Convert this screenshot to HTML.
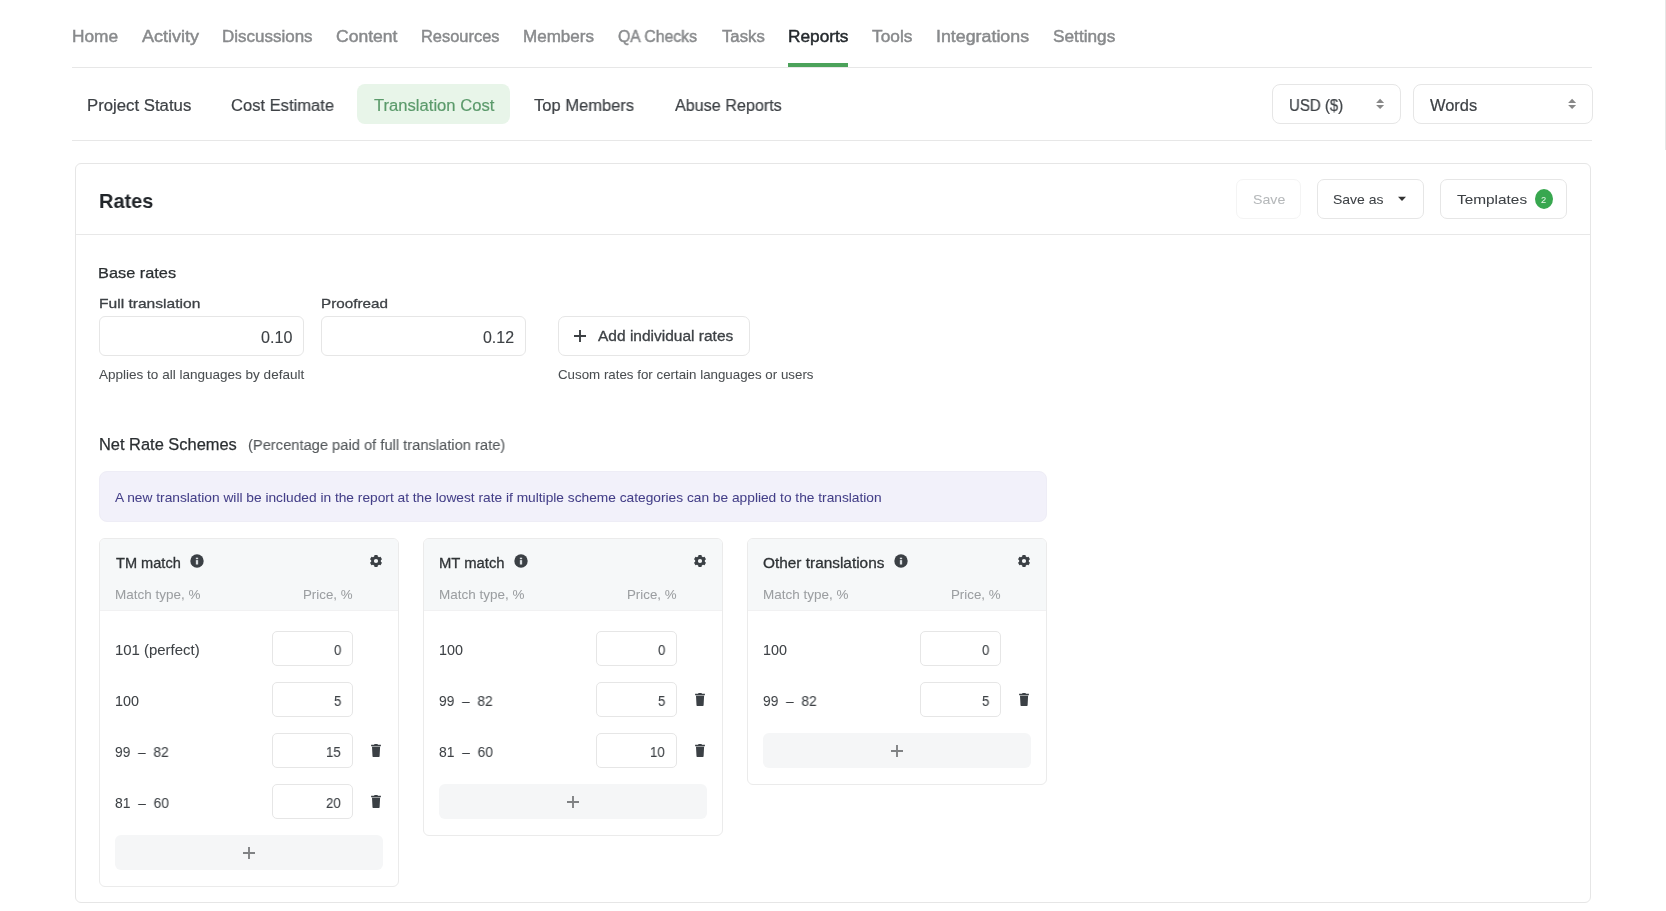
<!DOCTYPE html>
<html><head><meta charset="utf-8"><title>Translation Cost</title>
<style>
html,body{margin:0;padding:0;background:#fff;width:1666px;height:911px;overflow:hidden;position:relative}
.t{position:absolute;font-family:"Liberation Sans",sans-serif;white-space:nowrap;line-height:normal;transform-origin:0 0;will-change:transform}
.r{position:absolute;box-sizing:border-box}
svg.r{display:block}
</style></head><body>
<div class="r" style="left:72px;top:67px;width:1520px;height:1px;background:#e7e7e7"></div>
<div class="r" style="left:788px;top:63px;width:60px;height:4px;background:#4ba25a"></div>
<div class="r" style="left:1665px;top:0px;width:1px;height:150px;background:#e6e6e6"></div>
<div class="r" style="left:357px;top:84px;width:153px;height:40px;background:#e8f5e9;border-radius:8px"></div>
<div class="r" style="left:1272px;top:84px;width:129px;height:40px;border:1px solid #e6e6e6;border-radius:8px;background:#fff"></div>
<div class="r" style="left:1413px;top:84px;width:180px;height:40px;border:1px solid #e6e6e6;border-radius:8px;background:#fff"></div>
<svg class="r" style="left:1376px;top:98px" width="10" height="12" viewBox="0 0 10 12"><path d="M4.1 0.8 L8.1 5 L0.1 5 Z M4.1 11 L8.1 6.9 L0.1 6.9 Z" fill="#888"/></svg>
<svg class="r" style="left:1568px;top:98px" width="10" height="12" viewBox="0 0 10 12"><path d="M4.1 0.8 L8.1 5 L0.1 5 Z M4.1 11 L8.1 6.9 L0.1 6.9 Z" fill="#888"/></svg>
<div class="r" style="left:72px;top:140px;width:1520px;height:1px;background:#e7e7e7"></div>
<div class="r" style="left:75px;top:163px;width:1516px;height:740px;border:1px solid #e6e6e6;border-radius:6px;background:#fff"></div>
<div class="r" style="left:76px;top:234px;width:1514px;height:1px;background:#e8e8e8"></div>
<div class="r" style="left:1236px;top:179px;width:65px;height:40px;border:1px solid #f4f4f4;border-radius:7px"></div>
<div class="r" style="left:1317px;top:179px;width:107px;height:40px;border:1px solid #e6e6e6;border-radius:7px"></div>
<svg class="r" style="left:1397px;top:196px" width="10" height="6" viewBox="0 0 10 6"><path d="M1 0.8 L9 0.8 L5 5 Z" fill="#333"/></svg>
<div class="r" style="left:1440px;top:179px;width:127px;height:40px;border:1px solid #e6e6e6;border-radius:7px"></div>
<div class="r" style="left:1535px;top:189px;width:18px;height:20px;background:#38a74f;border-radius:50%"></div>
<div class="r" style="left:99px;top:316px;width:205px;height:40px;border:1px solid #e6e6e6;border-radius:6px"></div>
<div class="r" style="left:321px;top:316px;width:205px;height:40px;border:1px solid #e6e6e6;border-radius:6px"></div>
<div class="r" style="left:558px;top:316px;width:192px;height:40px;border:1px solid #e6e6e6;border-radius:7px"></div>
<svg class="r" style="left:574px;top:330px" width="12" height="12" viewBox="0 0 12 12"><path d="M6 0 V12 M0 6 H12" stroke="#3c4043" stroke-width="1.9"/></svg>
<div class="r" style="left:99px;top:471px;width:948px;height:51px;background:#f2f1fa;border:1px solid #eeedf6;border-radius:8px"></div>
<div class="r" style="left:99px;top:538px;width:300px;height:349px;border:1px solid #ebebeb;border-radius:6px;background:#fff"></div>
<div class="r" style="left:100px;top:539px;width:298px;height:72px;background:#f6f8f9;border-bottom:1px solid #f1f1f2;border-radius:5px 5px 0 0"></div>
<svg class="r" style="left:188.8px;top:553px" width="16" height="16" viewBox="0 0 16 16"><circle cx="8" cy="8" r="6.7" fill="#3b4045"/><rect x="6.85" y="7.1" width="2.3" height="4.4" fill="#d9dde0"/><rect x="6.85" y="4.7" width="2.3" height="1.5" fill="#d9dde0"/></svg>
<svg class="r" style="left:368px;top:552.7px" width="16" height="16" viewBox="0 0 16 16"><path fill="#3b4045" fill-rule="evenodd" d="M6.15 3.46 L6.57 1.92 L9.43 1.92 L9.85 3.46 L11.00 4.13 L12.56 3.72 L13.98 6.19 L12.85 7.33 L12.85 8.67 L13.98 9.81 L12.56 12.28 L11.00 11.87 L9.85 12.54 L9.43 14.08 L6.57 14.08 L6.15 12.54 L5.00 11.87 L3.44 12.28 L2.02 9.81 L3.15 8.67 L3.15 7.33 L2.02 6.19 L3.44 3.72 L5.00 4.13 Z M10.10 8.00 A2.1 2.1 0 1 0 5.90 8.00 A2.1 2.1 0 1 0 10.10 8.00 Z"/></svg>
<div class="r" style="left:272px;top:631px;width:81px;height:35px;border:1px solid #e6e6e6;border-radius:5px;background:#fff"></div>
<div class="r" style="left:272px;top:682px;width:81px;height:35px;border:1px solid #e6e6e6;border-radius:5px;background:#fff"></div>
<div class="r" style="left:272px;top:733px;width:81px;height:35px;border:1px solid #e6e6e6;border-radius:5px;background:#fff"></div>
<svg class="r" style="left:370px;top:742.8px" width="12" height="15" viewBox="0 0 12 15"><path fill="#3b4045" d="M4.3 1 H7.7 V2 H4.3 Z M1.1 1.8 H10.9 V3.2 H1.1 Z M2 3.8 H10.1 L9.6 13.3 Q9.55 13.9 9 13.9 H3.1 Q2.55 13.9 2.5 13.3 Z"/></svg>
<div class="r" style="left:272px;top:784px;width:81px;height:35px;border:1px solid #e6e6e6;border-radius:5px;background:#fff"></div>
<svg class="r" style="left:370px;top:793.8px" width="12" height="15" viewBox="0 0 12 15"><path fill="#3b4045" d="M4.3 1 H7.7 V2 H4.3 Z M1.1 1.8 H10.9 V3.2 H1.1 Z M2 3.8 H10.1 L9.6 13.3 Q9.55 13.9 9 13.9 H3.1 Q2.55 13.9 2.5 13.3 Z"/></svg>
<div class="r" style="left:115px;top:835px;width:268px;height:35px;background:#f5f6f7;border-radius:6px"></div>
<svg class="r" style="left:243px;top:847px" width="12" height="12" viewBox="0 0 12 12"><path d="M6 0 V12 M0 6 H12" stroke="#808284" stroke-width="1.9"/></svg>
<div class="r" style="left:423px;top:538px;width:300px;height:298px;border:1px solid #ebebeb;border-radius:6px;background:#fff"></div>
<div class="r" style="left:424px;top:539px;width:298px;height:72px;background:#f6f8f9;border-bottom:1px solid #f1f1f2;border-radius:5px 5px 0 0"></div>
<svg class="r" style="left:512.9px;top:553px" width="16" height="16" viewBox="0 0 16 16"><circle cx="8" cy="8" r="6.7" fill="#3b4045"/><rect x="6.85" y="7.1" width="2.3" height="4.4" fill="#d9dde0"/><rect x="6.85" y="4.7" width="2.3" height="1.5" fill="#d9dde0"/></svg>
<svg class="r" style="left:692px;top:552.7px" width="16" height="16" viewBox="0 0 16 16"><path fill="#3b4045" fill-rule="evenodd" d="M6.15 3.46 L6.57 1.92 L9.43 1.92 L9.85 3.46 L11.00 4.13 L12.56 3.72 L13.98 6.19 L12.85 7.33 L12.85 8.67 L13.98 9.81 L12.56 12.28 L11.00 11.87 L9.85 12.54 L9.43 14.08 L6.57 14.08 L6.15 12.54 L5.00 11.87 L3.44 12.28 L2.02 9.81 L3.15 8.67 L3.15 7.33 L2.02 6.19 L3.44 3.72 L5.00 4.13 Z M10.10 8.00 A2.1 2.1 0 1 0 5.90 8.00 A2.1 2.1 0 1 0 10.10 8.00 Z"/></svg>
<div class="r" style="left:596px;top:631px;width:81px;height:35px;border:1px solid #e6e6e6;border-radius:5px;background:#fff"></div>
<div class="r" style="left:596px;top:682px;width:81px;height:35px;border:1px solid #e6e6e6;border-radius:5px;background:#fff"></div>
<svg class="r" style="left:694px;top:691.8px" width="12" height="15" viewBox="0 0 12 15"><path fill="#3b4045" d="M4.3 1 H7.7 V2 H4.3 Z M1.1 1.8 H10.9 V3.2 H1.1 Z M2 3.8 H10.1 L9.6 13.3 Q9.55 13.9 9 13.9 H3.1 Q2.55 13.9 2.5 13.3 Z"/></svg>
<div class="r" style="left:596px;top:733px;width:81px;height:35px;border:1px solid #e6e6e6;border-radius:5px;background:#fff"></div>
<svg class="r" style="left:694px;top:742.8px" width="12" height="15" viewBox="0 0 12 15"><path fill="#3b4045" d="M4.3 1 H7.7 V2 H4.3 Z M1.1 1.8 H10.9 V3.2 H1.1 Z M2 3.8 H10.1 L9.6 13.3 Q9.55 13.9 9 13.9 H3.1 Q2.55 13.9 2.5 13.3 Z"/></svg>
<div class="r" style="left:439px;top:784px;width:268px;height:35px;background:#f5f6f7;border-radius:6px"></div>
<svg class="r" style="left:567px;top:796px" width="12" height="12" viewBox="0 0 12 12"><path d="M6 0 V12 M0 6 H12" stroke="#808284" stroke-width="1.9"/></svg>
<div class="r" style="left:747px;top:538px;width:300px;height:247px;border:1px solid #ebebeb;border-radius:6px;background:#fff"></div>
<div class="r" style="left:748px;top:539px;width:298px;height:72px;background:#f6f8f9;border-bottom:1px solid #f1f1f2;border-radius:5px 5px 0 0"></div>
<svg class="r" style="left:893.3px;top:553px" width="16" height="16" viewBox="0 0 16 16"><circle cx="8" cy="8" r="6.7" fill="#3b4045"/><rect x="6.85" y="7.1" width="2.3" height="4.4" fill="#d9dde0"/><rect x="6.85" y="4.7" width="2.3" height="1.5" fill="#d9dde0"/></svg>
<svg class="r" style="left:1016px;top:552.7px" width="16" height="16" viewBox="0 0 16 16"><path fill="#3b4045" fill-rule="evenodd" d="M6.15 3.46 L6.57 1.92 L9.43 1.92 L9.85 3.46 L11.00 4.13 L12.56 3.72 L13.98 6.19 L12.85 7.33 L12.85 8.67 L13.98 9.81 L12.56 12.28 L11.00 11.87 L9.85 12.54 L9.43 14.08 L6.57 14.08 L6.15 12.54 L5.00 11.87 L3.44 12.28 L2.02 9.81 L3.15 8.67 L3.15 7.33 L2.02 6.19 L3.44 3.72 L5.00 4.13 Z M10.10 8.00 A2.1 2.1 0 1 0 5.90 8.00 A2.1 2.1 0 1 0 10.10 8.00 Z"/></svg>
<div class="r" style="left:920px;top:631px;width:81px;height:35px;border:1px solid #e6e6e6;border-radius:5px;background:#fff"></div>
<div class="r" style="left:920px;top:682px;width:81px;height:35px;border:1px solid #e6e6e6;border-radius:5px;background:#fff"></div>
<svg class="r" style="left:1018px;top:691.8px" width="12" height="15" viewBox="0 0 12 15"><path fill="#3b4045" d="M4.3 1 H7.7 V2 H4.3 Z M1.1 1.8 H10.9 V3.2 H1.1 Z M2 3.8 H10.1 L9.6 13.3 Q9.55 13.9 9 13.9 H3.1 Q2.55 13.9 2.5 13.3 Z"/></svg>
<div class="r" style="left:763px;top:733px;width:268px;height:35px;background:#f5f6f7;border-radius:6px"></div>
<svg class="r" style="left:891px;top:745px" width="12" height="12" viewBox="0 0 12 12"><path d="M6 0 V12 M0 6 H12" stroke="#808284" stroke-width="1.9"/></svg>
<div class="t" style="left:71.65px;top:26.90px;font-size:16.22px;font-weight:400;color:#888a8c;-webkit-text-stroke:0.45px #888a8c;transform:scaleX(1.0667);">Home</div>
<div class="t" style="left:141.60px;top:26.90px;font-size:16.22px;font-weight:400;color:#888a8c;-webkit-text-stroke:0.45px #888a8c;transform:scaleX(1.1135);">Activity</div>
<div class="t" style="left:221.97px;top:26.90px;font-size:16.22px;font-weight:400;color:#888a8c;-webkit-text-stroke:0.45px #888a8c;transform:scaleX(1.0477);">Discussions</div>
<div class="t" style="left:335.78px;top:26.90px;font-size:16.22px;font-weight:400;color:#888a8c;-webkit-text-stroke:0.45px #888a8c;transform:scaleX(1.0819);">Content</div>
<div class="t" style="left:421.22px;top:26.90px;font-size:16.22px;font-weight:400;color:#888a8c;-webkit-text-stroke:0.45px #888a8c;transform:scaleX(1.0138);">Resources</div>
<div class="t" style="left:523.17px;top:26.90px;font-size:16.22px;font-weight:400;color:#888a8c;-webkit-text-stroke:0.45px #888a8c;transform:scaleX(1.0513);">Members</div>
<div class="t" style="left:618.16px;top:26.90px;font-size:16.22px;font-weight:400;color:#888a8c;-webkit-text-stroke:0.45px #888a8c;transform:scaleX(0.9745);">QA Checks</div>
<div class="t" style="left:721.84px;top:26.90px;font-size:16.22px;font-weight:400;color:#888a8c;-webkit-text-stroke:0.45px #888a8c;transform:scaleX(1.0319);">Tasks</div>
<div class="t" style="left:787.75px;top:26.90px;font-size:16.22px;font-weight:400;color:#24292d;-webkit-text-stroke:0.45px #24292d;transform:scaleX(1.0651);">Reports</div>
<div class="t" style="left:872.13px;top:26.90px;font-size:16.22px;font-weight:400;color:#888a8c;-webkit-text-stroke:0.45px #888a8c;transform:scaleX(1.0672);">Tools</div>
<div class="t" style="left:935.91px;top:26.90px;font-size:16.22px;font-weight:400;color:#888a8c;-webkit-text-stroke:0.45px #888a8c;transform:scaleX(1.0990);">Integrations</div>
<div class="t" style="left:1053.16px;top:26.90px;font-size:16.22px;font-weight:400;color:#888a8c;-webkit-text-stroke:0.45px #888a8c;transform:scaleX(1.0644);">Settings</div>
<div class="t" style="left:87.09px;top:95.90px;font-size:16.62px;font-weight:400;color:#3d4145;-webkit-text-stroke:0.2px #3d4145;transform:scaleX(1.0084);">Project Status</div>
<div class="t" style="left:230.92px;top:95.90px;font-size:16.62px;font-weight:400;color:#3d4145;-webkit-text-stroke:0.2px #3d4145;transform:scaleX(0.9962);">Cost Estimate</div>
<div class="t" style="left:373.74px;top:95.90px;font-size:16.62px;font-weight:400;color:#5b9a6b;-webkit-text-stroke:0.2px #5b9a6b;">Translation Cost</div>
<div class="t" style="left:534.44px;top:95.90px;font-size:16.62px;font-weight:400;color:#3d4145;-webkit-text-stroke:0.2px #3d4145;transform:scaleX(0.9950);">Top Members</div>
<div class="t" style="left:675.00px;top:95.90px;font-size:16.62px;font-weight:400;color:#3d4145;-webkit-text-stroke:0.2px #3d4145;transform:scaleX(0.9715);">Abuse Reports</div>
<div class="t" style="left:1288.66px;top:95.90px;font-size:16.22px;font-weight:400;color:#3d4145;-webkit-text-stroke:0.2px #3d4145;transform:scaleX(0.9273);">USD ($)</div>
<div class="t" style="left:1430.20px;top:95.80px;font-size:16.22px;font-weight:400;color:#3d4145;-webkit-text-stroke:0.2px #3d4145;transform:scaleX(1.0138);">Words</div>
<div class="t" style="left:99.36px;top:190.00px;font-size:20.27px;font-weight:700;color:#212529;transform:scaleX(0.9827);">Rates</div>
<div class="t" style="left:1252.56px;top:191.70px;font-size:13.38px;font-weight:400;color:#b5b8ba;-webkit-text-stroke:0.05px #b5b8ba;transform:scaleX(1.0597);">Save</div>
<div class="t" style="left:1333.36px;top:191.70px;font-size:13.38px;font-weight:400;color:#3d4145;-webkit-text-stroke:0.05px #3d4145;transform:scaleX(1.0461);">Save as</div>
<div class="t" style="left:1456.76px;top:191.70px;font-size:13.38px;font-weight:400;color:#3d4145;-webkit-text-stroke:0.05px #3d4145;transform:scaleX(1.1499);">Templates</div>
<div class="t" style="left:1541.37px;top:193.80px;font-size:9.46px;font-weight:400;color:#e8f7ea;-webkit-text-stroke:0.05px #e8f7ea;transform:scaleX(0.9697);">2</div>
<div class="t" style="left:98.32px;top:264.00px;font-size:15.0px;font-weight:400;color:#2b2f32;-webkit-text-stroke:0.25px #2b2f32;transform:scaleX(1.0890);">Base rates</div>
<div class="t" style="left:98.78px;top:295.80px;font-size:13.51px;font-weight:400;color:#3d4145;-webkit-text-stroke:0.28px #3d4145;transform:scaleX(1.1541);">Full translation</div>
<div class="t" style="left:320.51px;top:295.80px;font-size:13.51px;font-weight:400;color:#3d4145;-webkit-text-stroke:0.28px #3d4145;transform:scaleX(1.1284);">Proofread</div>
<div class="t" style="left:260.50px;top:329.10px;font-size:15.95px;font-weight:400;color:#3d4145;-webkit-text-stroke:0.12px #3d4145;transform:scaleX(1.0117);">0.10</div>
<div class="t" style="left:482.80px;top:329.10px;font-size:15.95px;font-weight:400;color:#3d4145;-webkit-text-stroke:0.12px #3d4145;">0.12</div>
<div class="t" style="left:99.00px;top:367.70px;font-size:12.03px;font-weight:400;color:#4a4e51;-webkit-text-stroke:0.05px #4a4e51;transform:scaleX(1.1253);">Applies to all languages by default</div>
<div class="t" style="left:598.40px;top:328.90px;font-size:13.78px;font-weight:400;color:#3d4145;-webkit-text-stroke:0.28px #3d4145;transform:scaleX(1.1257);">Add individual rates</div>
<div class="t" style="left:557.58px;top:367.80px;font-size:12.57px;font-weight:400;color:#4a4e51;-webkit-text-stroke:0.05px #4a4e51;transform:scaleX(1.0606);">Cusom rates for certain languages or users</div>
<div class="t" style="left:98.52px;top:435.20px;font-size:16.08px;font-weight:400;color:#2b2f32;-webkit-text-stroke:0.25px #2b2f32;transform:scaleX(1.0211);">Net Rate Schemes</div>
<div class="t" style="left:248.01px;top:436.20px;font-size:15.14px;font-weight:400;color:#55595c;-webkit-text-stroke:0.12px #55595c;transform:scaleX(0.9712);">(Percentage paid of full translation rate)</div>
<div class="t" style="left:115.20px;top:491.10px;font-size:12.7px;font-weight:400;color:#443f88;-webkit-text-stroke:0.05px #443f88;transform:scaleX(1.0827);">A new translation will be included in the report at the lowest rate if multiple scheme categories can be applied to the translation</div>
<div class="t" style="left:115.77px;top:554.50px;font-size:13.92px;font-weight:400;color:#2f3336;-webkit-text-stroke:0.28px #2f3336;transform:scaleX(1.0481);">TM match</div>
<div class="t" style="left:114.95px;top:587.10px;font-size:12.84px;font-weight:400;color:#9b9ea1;-webkit-text-stroke:0.05px #9b9ea1;transform:scaleX(1.0504);">Match type, %</div>
<div class="t" style="left:302.56px;top:587.00px;font-size:12.97px;font-weight:400;color:#9b9ea1;-webkit-text-stroke:0.05px #9b9ea1;transform:scaleX(1.0258);">Price, %</div>
<div class="t" style="left:114.57px;top:641.60px;font-size:13.92px;font-weight:400;color:#3d4145;-webkit-text-stroke:0.05px #3d4145;transform:scaleX(1.0733);">101 (perfect)</div>
<div class="t" style="left:333.50px;top:642.20px;font-size:14.32px;font-weight:400;color:#3d4145;-webkit-text-stroke:0.12px #3d4145;transform:scaleX(0.9200);">0</div>
<div class="t" style="left:114.60px;top:692.60px;font-size:13.92px;font-weight:400;color:#3d4145;-webkit-text-stroke:0.05px #3d4145;transform:scaleX(1.0314);">100</div>
<div class="t" style="left:333.71px;top:693.20px;font-size:14.32px;font-weight:400;color:#3d4145;-webkit-text-stroke:0.12px #3d4145;transform:scaleX(0.9200);">5</div>
<div class="t" style="left:114.85px;top:743.60px;font-size:13.92px;font-weight:400;color:#3d4145;-webkit-text-stroke:0.05px #3d4145;transform:scaleX(0.9894);">99  –  82</div>
<div class="t" style="left:326.38px;top:744.20px;font-size:14.32px;font-weight:400;color:#3d4145;-webkit-text-stroke:0.12px #3d4145;transform:scaleX(0.9200);">15</div>
<div class="t" style="left:115.07px;top:794.60px;font-size:13.92px;font-weight:400;color:#3d4145;-webkit-text-stroke:0.05px #3d4145;transform:scaleX(0.9945);">81  –  60</div>
<div class="t" style="left:326.17px;top:795.20px;font-size:14.32px;font-weight:400;color:#3d4145;-webkit-text-stroke:0.12px #3d4145;transform:scaleX(0.9200);">20</div>
<div class="t" style="left:438.84px;top:554.50px;font-size:13.92px;font-weight:400;color:#2f3336;-webkit-text-stroke:0.28px #2f3336;transform:scaleX(1.0650);">MT match</div>
<div class="t" style="left:438.95px;top:587.10px;font-size:12.84px;font-weight:400;color:#9b9ea1;-webkit-text-stroke:0.05px #9b9ea1;transform:scaleX(1.0504);">Match type, %</div>
<div class="t" style="left:626.56px;top:587.00px;font-size:12.97px;font-weight:400;color:#9b9ea1;-webkit-text-stroke:0.05px #9b9ea1;transform:scaleX(1.0258);">Price, %</div>
<div class="t" style="left:438.60px;top:641.60px;font-size:13.92px;font-weight:400;color:#3d4145;-webkit-text-stroke:0.05px #3d4145;transform:scaleX(1.0314);">100</div>
<div class="t" style="left:657.50px;top:642.20px;font-size:14.32px;font-weight:400;color:#3d4145;-webkit-text-stroke:0.12px #3d4145;transform:scaleX(0.9200);">0</div>
<div class="t" style="left:438.85px;top:692.60px;font-size:13.92px;font-weight:400;color:#3d4145;-webkit-text-stroke:0.05px #3d4145;transform:scaleX(0.9894);">99  –  82</div>
<div class="t" style="left:657.71px;top:693.20px;font-size:14.32px;font-weight:400;color:#3d4145;-webkit-text-stroke:0.12px #3d4145;transform:scaleX(0.9200);">5</div>
<div class="t" style="left:439.07px;top:743.60px;font-size:13.92px;font-weight:400;color:#3d4145;-webkit-text-stroke:0.05px #3d4145;transform:scaleX(0.9945);">81  –  60</div>
<div class="t" style="left:650.17px;top:744.20px;font-size:14.32px;font-weight:400;color:#3d4145;-webkit-text-stroke:0.12px #3d4145;transform:scaleX(0.9200);">10</div>
<div class="t" style="left:763.28px;top:554.50px;font-size:13.92px;font-weight:400;color:#2f3336;-webkit-text-stroke:0.28px #2f3336;transform:scaleX(1.1059);">Other translations</div>
<div class="t" style="left:762.95px;top:587.10px;font-size:12.84px;font-weight:400;color:#9b9ea1;-webkit-text-stroke:0.05px #9b9ea1;transform:scaleX(1.0504);">Match type, %</div>
<div class="t" style="left:950.56px;top:587.00px;font-size:12.97px;font-weight:400;color:#9b9ea1;-webkit-text-stroke:0.05px #9b9ea1;transform:scaleX(1.0258);">Price, %</div>
<div class="t" style="left:762.60px;top:641.60px;font-size:13.92px;font-weight:400;color:#3d4145;-webkit-text-stroke:0.05px #3d4145;transform:scaleX(1.0314);">100</div>
<div class="t" style="left:981.50px;top:642.20px;font-size:14.32px;font-weight:400;color:#3d4145;-webkit-text-stroke:0.12px #3d4145;transform:scaleX(0.9200);">0</div>
<div class="t" style="left:762.85px;top:692.60px;font-size:13.92px;font-weight:400;color:#3d4145;-webkit-text-stroke:0.05px #3d4145;transform:scaleX(0.9894);">99  –  82</div>
<div class="t" style="left:981.71px;top:693.20px;font-size:14.32px;font-weight:400;color:#3d4145;-webkit-text-stroke:0.12px #3d4145;transform:scaleX(0.9200);">5</div>
</body></html>
